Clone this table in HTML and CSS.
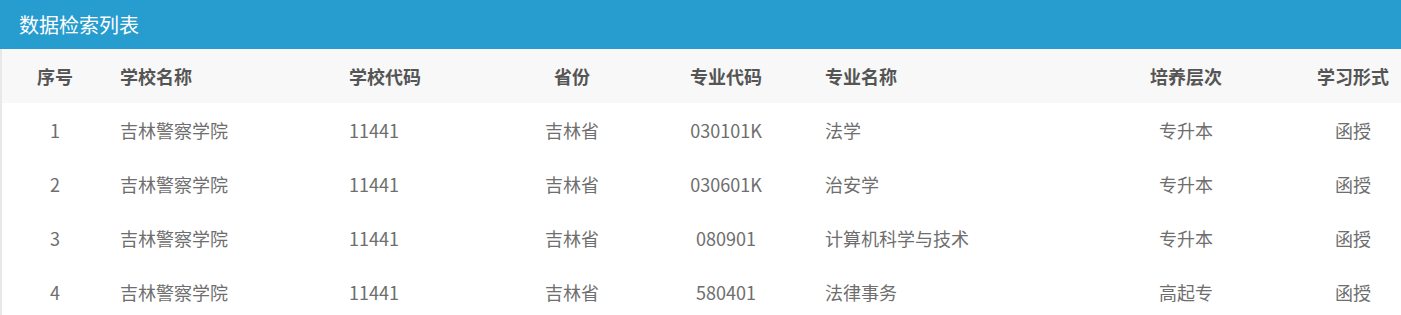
FILE: index.html
```html
<!DOCTYPE html>
<html lang="zh-CN">
<head>
<meta charset="utf-8">
<title>数据检索列表</title>
<link rel="stylesheet" href="styles.css">
</head>
<body>
<div class="panel">
  <div class="panel-title">数据检索列表</div>
  <table class="grid">
    <colgroup>
      <col class="c1"><col class="c2"><col class="c3"><col class="c4"><col class="c5"><col class="c6"><col class="c7"><col class="c8">
    </colgroup>
    <thead>
      <tr>
        <th class="center">序号</th>
        <th>学校名称</th>
        <th>学校代码</th>
        <th class="center">省份</th>
        <th class="center">专业代码</th>
        <th>专业名称</th>
        <th class="center">培养层次</th>
        <th class="center">学习形式</th>
      </tr>
    </thead>
    <tbody>
      <tr>
        <td class="center">1</td><td>吉林警察学院</td><td>11441</td><td class="center">吉林省</td><td class="center">030101K</td><td>法学</td><td class="center">专升本</td><td class="center">函授</td>
      </tr>
      <tr>
        <td class="center">2</td><td>吉林警察学院</td><td>11441</td><td class="center">吉林省</td><td class="center">030601K</td><td>治安学</td><td class="center">专升本</td><td class="center">函授</td>
      </tr>
      <tr>
        <td class="center">3</td><td>吉林警察学院</td><td>11441</td><td class="center">吉林省</td><td class="center">080901</td><td>计算机科学与技术</td><td class="center">专升本</td><td class="center">函授</td>
      </tr>
      <tr>
        <td class="center">4</td><td>吉林警察学院</td><td>11441</td><td class="center">吉林省</td><td class="center">580401</td><td>法律事务</td><td class="center">高起专</td><td class="center">函授</td>
      </tr>
    </tbody>
  </table>
</div>
</body>
</html>
```

FILE: styles.css
```css
html, body {
  margin: 0;
  padding: 0;
  background: #ffffff;
}
body {
  font-family: "Noto Sans CJK SC", "Noto Sans", sans-serif;
  width: 1401px;
}
.panel {
  width: 1401px;
  border-left: 2px solid #e8e8e8;
  box-sizing: border-box;
}
.panel-title {
  height: 49px;
  line-height: 49px;
  background: #279cce;
  color: #ffffff;
  font-size: 20px;
  padding-left: 19px;
  margin-left: -2px;
}
.grid {
  width: 1399px;
  border-collapse: collapse;
  table-layout: fixed;
}
.c1 { width: 106px; }
.c2 { width: 229px; }
.c3 { width: 168px; }
.c4 { width: 134px; }
.c5 { width: 174px; }
.c6 { width: 254px; }
.c7 { width: 238px; }
.c8 { width: 96px; }
.grid th,
.grid td {
  height: 54px;
  padding: 0 12px;
  text-align: left;
  font-size: 18px;
  line-height: 24px;
  white-space: nowrap;
  vertical-align: middle;
}
.grid th {
  background: #f8f8f8;
  color: #555555;
  font-weight: bold;
}
.grid td {
  color: #6e6e6e;
}
.grid .center {
  text-align: center;
}
```
